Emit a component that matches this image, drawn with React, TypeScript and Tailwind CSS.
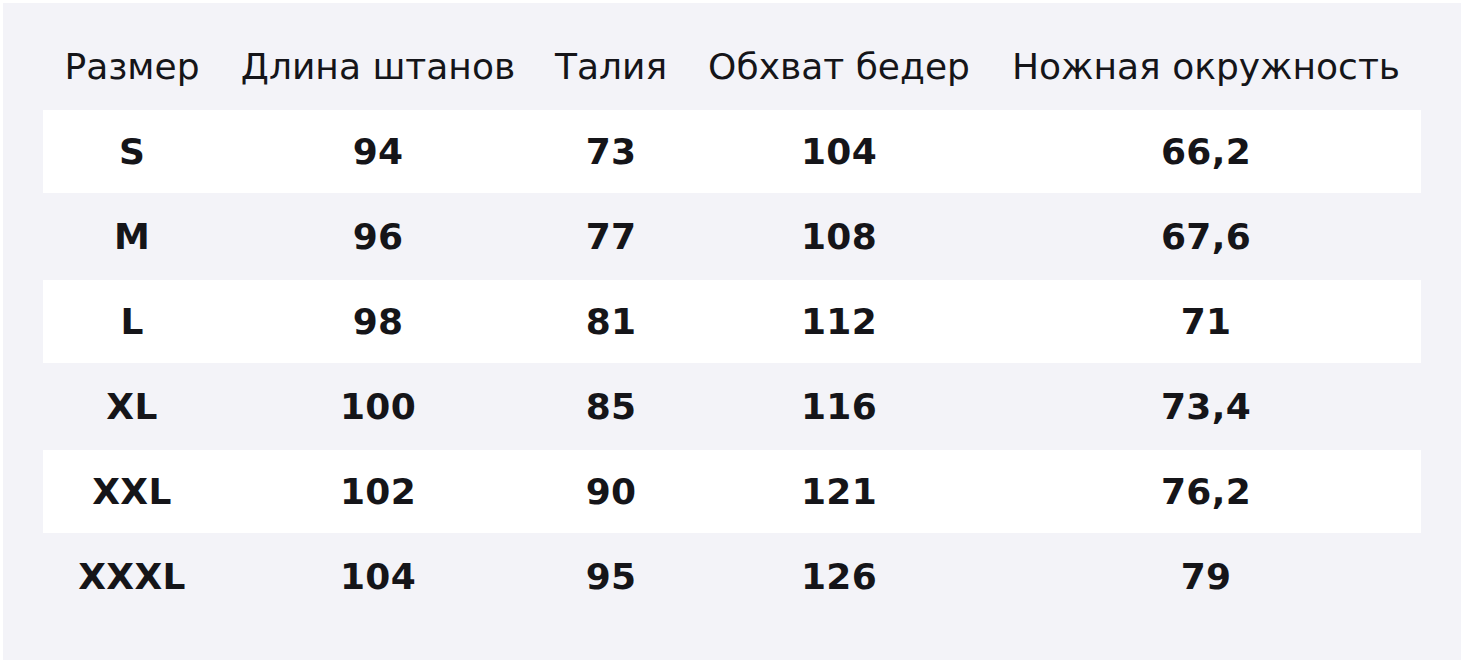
const headers = ['Размер', 'Длина штанов', 'Талия', 'Обхват бедер', 'Ножная окружность']

const rows = [
  ['S', '94', '73', '104', '66,2'],
  ['M', '96', '77', '108', '67,6'],
  ['L', '98', '81', '112', '71'],
  ['XL', '100', '85', '116', '73,4'],
  ['XXL', '102', '90', '121', '76,2'],
  ['XXXL', '104', '95', '126', '79'],
]

const cols = 'grid grid-cols-[178px_314px_152px_304px_430px]'

export default function App() {
  return (
    <div className="w-[1464px] h-[663px] bg-white p-[3px]">
      <div
        className="h-full bg-[#f3f3f8] px-[40px] pt-[40px] text-[#151519]"
        style={{ fontFamily: '"DejaVu Sans", sans-serif' }}
      >
        <div className={`${cols} h-[67px] pt-[3px] text-center text-[36px] leading-[42px]`}>
          {headers.map((h) => (
            <div key={h} className="whitespace-nowrap">{h}</div>
          ))}
        </div>
        {rows.map((r, i) => (
          <div
            key={r[0]}
            className={`${cols} items-center text-center text-[36px] font-bold leading-[42px] tracking-[0.3px] ${
              i % 2 === 0 ? 'h-[83px] bg-white' : 'h-[87px]'
            }`}
          >
            {r.map((v, j) => (
              <div key={j}>{v}</div>
            ))}
          </div>
        ))}
      </div>
    </div>
  )
}
